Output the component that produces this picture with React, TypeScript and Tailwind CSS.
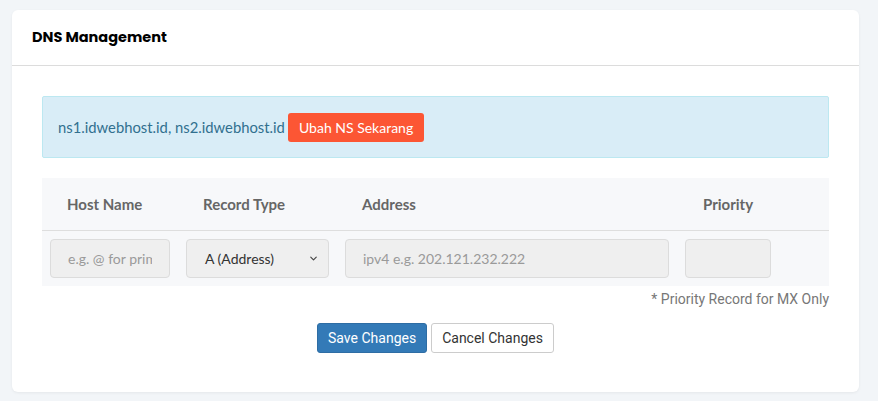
import { ChevronDown } from "lucide-react";

const lato = { fontFamily: "Lato, 'Open Sans', sans-serif" };

const App = () => {
  return (
    <div className="min-h-[401px] w-[878px] bg-[#f2f5f8] px-3 pt-[10px] pb-[9px]">
      <div className="w-[847px] rounded-md bg-white shadow-[0_1px_3px_rgba(0,0,0,0.06)]">
        <div className="flex h-[56px] items-center border-b border-[#dcdcdc] px-5">
          <h2 className="font-['Poppins','Inter',sans-serif] text-[14.5px] font-bold text-black">
            DNS Management
          </h2>
        </div>

        <div className="px-[30px] pt-[30px] pb-[39px]">
          <div
            className="mb-[20px] flex h-[62px] items-center rounded-[2px] border border-[#bce8f1] bg-[#d9edf7] px-[15px] text-[14.8px] text-[#31708f]"
            style={lato}
          >
            <span>ns1.idwebhost.id, ns2.idwebhost.id</span>
            <button className="ml-[3px] h-[29px] rounded-[3px] bg-[#fc5634] px-[11px] text-[14px] text-white">
              Ubah NS Sekarang
            </button>
          </div>

          <div className="bg-[#f7f8fa]" style={lato}>
            <div className="flex h-[53px] items-center border-b border-[#dedede] text-[15px] font-bold text-[#666]">
              <div className="w-[136px] pl-[25px]">Host Name</div>
              <div className="w-[159px] pl-[25px]">Record Type</div>
              <div className="w-[340px] pl-[25px]">Address</div>
              <div className="w-[102px] pl-[26px]">Priority</div>
            </div>
            <div className="flex h-[55px] items-center text-[14px]">
              <div className="w-[136px] px-2">
                <input
                  className="h-[39px] w-full rounded border border-[#dcdcdc] bg-[#efefef] px-[17px] placeholder:text-[#9a9a9a]"
                  placeholder="e.g. @ for primary"
                />
              </div>
              <div className="w-[159px] px-2">
                <div className="flex h-[39px] w-full items-center justify-between rounded border border-[#dcdcdc] bg-[#efefef] pr-[9px] pl-[18px] text-[#333]">
                  <span>A (Address)</span>
                  <ChevronDown size={11} strokeWidth={2.5} className="text-[#444]" />
                </div>
              </div>
              <div className="w-[340px] px-2">
                <input
                  className="h-[39px] w-full rounded border border-[#dcdcdc] bg-[#efefef] px-[17px] placeholder:text-[#9a9a9a]"
                  placeholder="ipv4 e.g. 202.121.232.222"
                />
              </div>
              <div className="w-[102px] px-2">
                <input className="h-[39px] w-full rounded border border-[#dcdcdc] bg-[#efefef]" />
              </div>
            </div>
          </div>

          <p className="mt-[3px] text-right font-['Roboto',sans-serif] text-[14px] text-[#777]">
            * Priority Record for MX Only
          </p>

          <div className="mt-[13px] flex justify-center gap-1 font-['Roboto',sans-serif] text-[14px]">
            <button className="h-[30px] rounded-[3px] border border-[#2e6da4] bg-[#337ab7] px-[10px] text-white">
              Save Changes
            </button>
            <button className="h-[30px] rounded-[3px] border border-[#ccc] bg-white px-[10px] text-[#333]">
              Cancel Changes
            </button>
          </div>
        </div>
      </div>
    </div>
  );
};

export default App;
